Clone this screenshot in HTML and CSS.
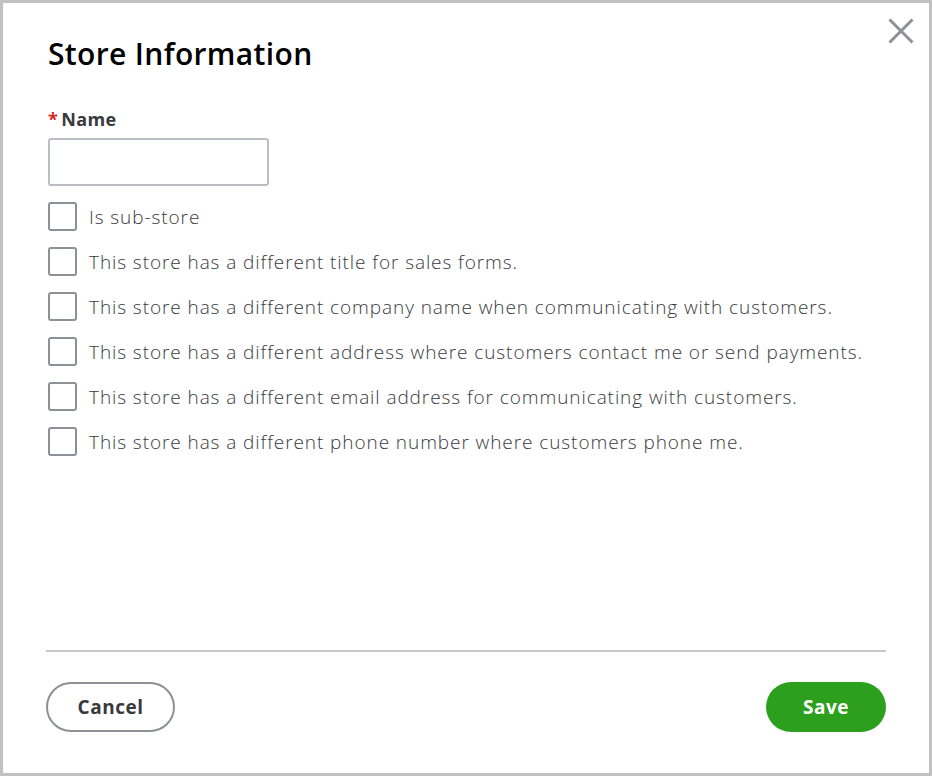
FILE: index.html
```html
<!DOCTYPE html>
<html>
<head>
<meta charset="utf-8">
<link rel="stylesheet" href="styles.css">
</head>
<body>
<div class="dialog">
  <button class="close" aria-label="Close">
    <svg width="26" height="26" viewBox="0 0 26 26"><path d="M1.5 1.5 L24.5 24.5 M24.5 1.5 L1.5 24.5" stroke="#8d9096" stroke-width="3" fill="none"/></svg>
  </button>
  <div class="body">
    <h1 class="title">Store Information</h1>
    <label class="field-label"><span class="req">*</span>Name</label>
    <input class="text-input" type="text">
    <ul class="checks">
      <li class="check"><span class="box"></span><span class="check-text">Is sub-store</span></li>
      <li class="check"><span class="box"></span><span class="check-text">This store has a different title for sales forms.</span></li>
      <li class="check"><span class="box"></span><span class="check-text">This store has a different company name when communicating with customers.</span></li>
      <li class="check"><span class="box"></span><span class="check-text">This store has a different address where customers contact me or send payments.</span></li>
      <li class="check"><span class="box"></span><span class="check-text">This store has a different email address for communicating with customers.</span></li>
      <li class="check"><span class="box"></span><span class="check-text">This store has a different phone number where customers phone me.</span></li>
    </ul>
  </div>
  <div class="footer">
    <button class="btn btn-secondary">Cancel</button>
    <button class="btn btn-primary">Save</button>
  </div>
</div>
</body>
</html>
```
FILE: styles.css
```css
* { box-sizing: border-box; }
html, body { margin: 0; padding: 0; background: #fff; }
body { font-family: "Open Sans", "Lato", sans-serif; color: #393a3d; }
.dialog {
  position: relative;
  width: 932px;
  height: 776px;
  border: 3px solid #c1c1c1;
  display: flex;
  flex-direction: column;
  background: #fff;
}
.close {
  position: absolute;
  top: 15px;
  right: 15px;
  width: 26px;
  height: 26px;
  padding: 0;
  border: 0;
  background: none;
  display: flex;
}
.body {
  flex: 1;
  padding: 33px 45px 0 45px;
  display: flex;
  flex-direction: column;
  align-items: flex-start;
}
.title {
  margin: 0;
  font-size: 30px;
  font-weight: 600;
  color: #000;
  line-height: 36px;
  letter-spacing: 0.35px;
}
.field-label {
  margin-top: 35px;
  font-size: 18px;
  font-weight: 700;
  line-height: 24px;
  letter-spacing: 0.4px;
  display: flex;
  align-items: baseline;
}
.req { color: #d52b1e; margin-right: 3px; font-weight: 700; }
.text-input {
  margin-top: 7px;
  width: 221px;
  height: 48px;
  border: 2px solid #babec5;
  border-radius: 3px;
  font-size: 18px;
  padding: 0 10px;
}
.checks {
  list-style: none;
  margin: 16px 0 0 0;
  padding: 0;
  display: flex;
  flex-direction: column;
  gap: 16px;
}
.check {
  display: flex;
  align-items: center;
  height: 29px;
  gap: 12px;
}
.box {
  width: 29px;
  height: 29px;
  border: 2px solid #8d9096;
  border-radius: 3px;
  flex: none;
}
.check-text {
  font-size: 19px;
  font-weight: 300;
  letter-spacing: 0.92px;
  color: #393a3d;
}
.footer {
  margin: 0 43px;
  border-top: 2px solid #c8c8c8;
  padding: 30px 0 41px 0;
  display: flex;
  justify-content: space-between;
}
.btn {
  height: 50px;
  border-radius: 25px;
  font-family: inherit;
  font-size: 19px;
  font-weight: 700;
  letter-spacing: 0.5px;
  cursor: pointer;
}
.btn-secondary {
  width: 129px;
  background: #fff;
  border: 2px solid #8d9096;
  color: #393a3d;
}
.btn-primary {
  width: 120px;
  background: #2ca01c;
  border: 0;
  color: #fff;
}
```
